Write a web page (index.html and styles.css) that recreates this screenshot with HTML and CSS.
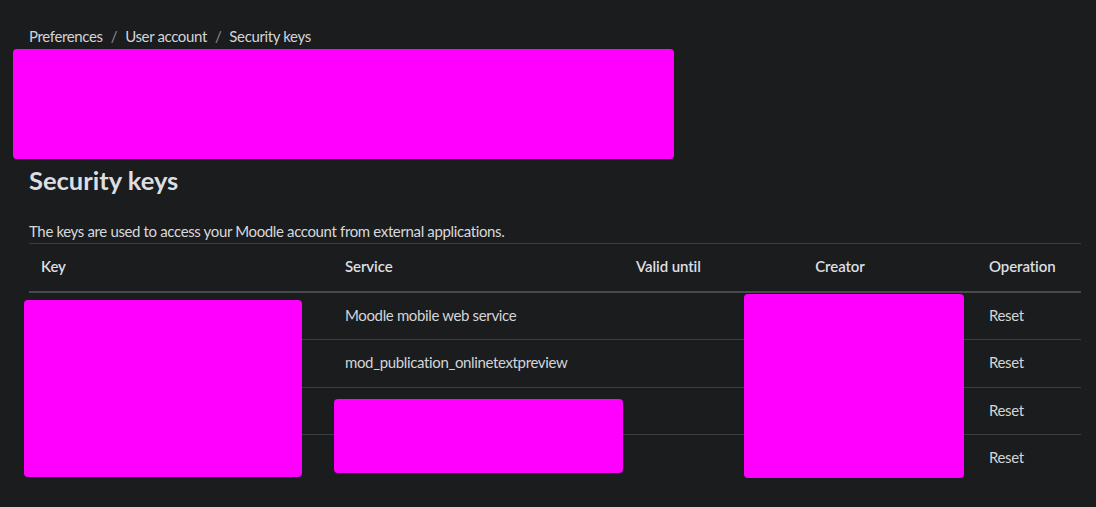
FILE: index.html
```html
<!DOCTYPE html>
<html lang="en">
<head>
<meta charset="utf-8">
<title>Security keys</title>
<link rel="stylesheet" href="styles.css">
</head>
<body>
<div class="page">
  <nav class="breadcrumb">
    <span class="crumb">Preferences</span>
    <span class="sep">/</span>
    <span class="crumb">User account</span>
    <span class="sep">/</span>
    <span class="crumb">Security keys</span>
  </nav>
  <div class="header-space"></div>
  <h2 class="title">Security keys</h2>
  <p class="desc">The keys are used to access your Moodle account from external applications.</p>
  <table class="keys">
    <colgroup>
      <col class="c-key"><col class="c-service"><col class="c-valid"><col class="c-creator"><col class="c-op">
    </colgroup>
    <thead>
      <tr><th>Key</th><th>Service</th><th class="nowrap">Valid until</th><th class="center">Creator</th><th>Operation</th></tr>
    </thead>
    <tbody>
      <tr><td></td><td>Moodle mobile web service</td><td></td><td></td><td>Reset</td></tr>
      <tr><td></td><td>mod_publication_onlinetextpreview</td><td></td><td></td><td>Reset</td></tr>
      <tr><td></td><td></td><td></td><td></td><td>Reset</td></tr>
      <tr><td></td><td></td><td></td><td></td><td>Reset</td></tr>
    </tbody>
  </table>
  <div class="redact r1"></div>
  <div class="redact r2"></div>
  <div class="redact r3"></div>
  <div class="redact r4"></div>
</div>
</body>
</html>
```

FILE: styles.css
```css
html, body {
  margin: 0;
  padding: 0;
  background: #1b1c1e;
}
body {
  font-family: "Lato", "Open Sans", sans-serif;
  font-size: 15px;
  line-height: 1.5;
  letter-spacing: -0.36px;
  color: #dcdfe2;
}
.page {
  position: relative;
  padding: 25px 15px 0 29px;
  min-height: 507px;
  box-sizing: border-box;
}
.breadcrumb {
  display: flex;
  align-items: center;
  height: 22px;
  font-size: 15px;
  color: #d2d5d8;
}
.breadcrumb .sep {
  color: #8b9095;
  padding: 0 8px;
}
.header-space {
  height: 117px;
}
.title {
  margin: 0;
  font-size: 25.5px;
  font-weight: 700;
  line-height: 32px;
  letter-spacing: 0;
  color: #dcdfe2;
}
.desc {
  margin: 24px 0 0 0;
  padding-bottom: 1px;
  line-height: 22px;
  color: #d6d9dc;
}
.keys {
  width: 1052px;
  border-collapse: collapse;
  table-layout: fixed;
}
.c-key { width: 304px; }
.c-service { width: 291px; }
.c-valid { width: 79px; }
.c-creator { width: 274px; }
.c-op { width: 104px; }
.keys th, .keys td {
  text-align: left;
  padding: 11px 12px 13px;
  line-height: 22.5px;
  height: 22.5px;
  vertical-align: top;
}
.keys th {
  font-weight: 600;
  letter-spacing: -0.1px;
  color: #dcdfe2;
  border-top: 1px solid #3a3d41;
  border-bottom: 2px solid #474b50;
}
.keys td {
  color: #d2d5d8;
  border-top: 1px solid #3a3d41;
}
.keys tbody tr:first-child td { border-top: none; }
.keys th.center { text-align: center; }
.nowrap { white-space: nowrap; overflow: visible; }
.redact {
  position: absolute;
  background: #ff00ff;
  border-radius: 4px;
}
.r1 { left: 13px; top: 49px; width: 661px; height: 110px; }
.r2 { left: 24px; top: 300px; width: 278px; height: 177px; }
.r3 { left: 334px; top: 399px; width: 289px; height: 74px; }
.r4 { left: 744px; top: 294px; width: 220px; height: 184px; }
```
